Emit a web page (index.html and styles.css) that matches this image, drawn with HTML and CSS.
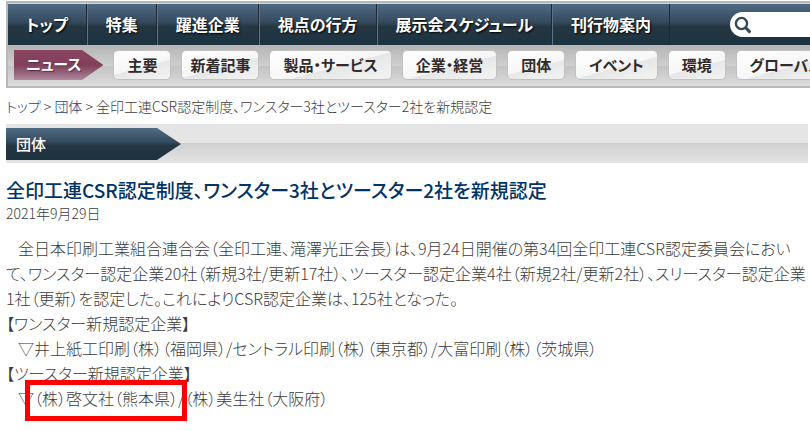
FILE: index.html
```html
<!DOCTYPE html>
<html lang="ja">
<head>
    <meta charset="UTF-8">
    <meta name="viewport" content="width=device-width, initial-scale=1.0">
    <title>全印工連CSR認定制度、ワンスター3社とツースター2社を新規認定</title>
    <link rel="stylesheet" href="styles.css">
</head>
<body>
    <header class="header">
        <nav class="main-nav">
            <a href="#">トップ</a>
            <a href="#">特集</a>
            <a href="#">躍進企業</a>
            <a href="#">視点の行方</a>
            <a href="#">展示会スケジュール</a>
            <a href="#">刊行物案内</a>
            <form class="search" action="#" method="get">
                <svg width="18" height="18" viewBox="0 0 18 18" aria-hidden="true">
                    <circle cx="7.5" cy="7.5" r="5.6" fill="none" stroke="#34495a" stroke-width="2.4"/>
                    <path d="M12 12l3.4 3.6" stroke="#34495a" stroke-width="3" stroke-linecap="round"/>
                </svg>
                <input type="text" name="q" aria-label="検索">
            </form>
        </nav>
        <nav class="sub-nav">
            <a href="#" class="current">ニュース</a>
            <a href="#" class="tab">主要</a>
            <a href="#" class="tab narrow">新着記事</a>
            <a href="#" class="tab">製品・サービス</a>
            <a href="#" class="tab">企業・経営</a>
            <a href="#" class="tab">団体</a>
            <a href="#" class="tab">イベント</a>
            <a href="#" class="tab">環境</a>
            <a href="#" class="tab">グローバル</a>
        </nav>
    </header>

    <main class="content">
        <div class="breadcrumb"><a href="#">トップ</a> &gt; <a href="#">団体</a> &gt; 全印工連CSR認定制度、ワンスター3社とツースター2社を新規認定</div>
        <div class="section-bar">
            <h2>団体</h2>
        </div>
        <article>
            <h1>全印工連CSR認定制度、ワンスター3社とツースター2社を新規認定</h1>
            <div class="date">2021年9月29日</div>
            <div class="text">
                <p class="indent">
                    全日本印刷工業組合連合会（全印工連、滝澤光正会長）は、9月24日開催の第34回全印工連CSR認定委員会におい<br>
                    て、ワンスター認定企業20社（新規3社/更新17社）、ツースター認定企業4社（新規2社/更新2社）、スリースター認定企業<br>
                    1社（更新）を認定した。これによりCSR認定企業は、125社となった。
                </p>
                <p>【ワンスター新規認定企業】</p>
                <p class="indent">▽井上紙工印刷（株）（福岡県）/セントラル印刷（株）（東京都）/大富印刷（株）（茨城県）</p>
                <p>【ツースター新規認定企業】</p>
                <p class="indent">▽<span class="marked">（株）啓文社（熊本県）</span>/（株）美生社（大阪府）</p>
            </div>
        </article>
    </main>
</body>
</html>
```
FILE: styles.css
```css
body {
    font-family: "Noto Sans CJK JP", sans-serif;
    font-feature-settings: "palt";
    margin: 0;
    padding: 1px 0 16px 6px;
    color: #3c3c3c;
    background-color: #fff;
}

a {
    text-decoration: none;
}

/* header */
.header {
    border: 2px solid #b8b9b6;
    border-right: 0;
    background-color: #d6d6d6;
    white-space: nowrap;
    overflow: hidden;
}

.main-nav {
    display: flex;
    align-items: center;
    height: 41px;
    margin-top: 1px;
    background: linear-gradient(#4f6b84, #34495c 45%, #243642 55%, #1c3440);
}

.main-nav a {
    flex: none;
    padding: 0 18px;
    border-left: 1px solid #5b7489;
    border-right: 1px solid #1b2a36;
    font-size: 16px;
    line-height: 41px;
    font-weight: bold;
    color: #fff;
    text-shadow: 1px 1px 2px #000;
}

.main-nav a:first-child {
    border-left: 0;
}

.search {
    display: flex;
    flex: 1;
    align-items: center;
    min-width: 60px;
    height: 25px;
    margin-left: 60px;
    padding-left: 4px;
    border-radius: 13px 0 0 13px;
    background-color: #fff;
}

.search svg {
    flex: none;
}

.search input {
    flex: 1;
    min-width: 0;
    border: 0;
    outline: none;
    background: none;
}

.sub-nav {
    display: flex;
    gap: 10px;
    padding: 5px 0 6px 6px;
    background: linear-gradient(#b4b4b4, #cfcfcf 50%, #c2c2c2 50%, #dcdcdc);
}

.sub-nav a {
    flex: none;
    box-sizing: border-box;
    height: 30px;
    font-size: 15px;
    line-height: 28px;
    font-weight: bold;
}

.current {
    padding: 0 22px 0 12px;
    color: #fff;
    text-shadow: 1px 1px 1px #5c2c42;
    background: linear-gradient(#8a4561, #80405a 50%, #93617a 75%, #b08a9c);
    clip-path: polygon(0 0, 68px 0, 100% 50%, 68px 100%, 0 100%);
}

.tab {
    padding: 0 13px;
    border: 1px solid #c0c1c0;
    border-radius: 5px;
    color: #332a2a;
    background: linear-gradient(165deg, #fff, #f6f6f6 55%, #e6e8e7 56%, #f3f3f3);
}

.tab.narrow {
    padding: 0 8px;
}

/* page body */
.content {
    padding-right: 2px;
}

.breadcrumb {
    padding: 8px 0 7px;
    font-size: 14px;
    line-height: 21px;
    font-weight: 300;
    white-space: nowrap;
}

.breadcrumb a {
    color: #144272;
}

.section-bar {
    padding: 4px 0 3px;
    background: linear-gradient(#e5e5e5 50%, #d0d0d0 50%, #e4e4e4);
}

.section-bar h2 {
    width: 165px;
    margin: 0;
    padding-left: 10px;
    font-size: 15px;
    line-height: 32px;
    font-weight: 500;
    color: #fff;
    background: linear-gradient(#4f6b84, #34495c 45%, #243642 55%, #1c3440);
    clip-path: polygon(0 0, 151px 0, 100% 50%, 151px 100%, 0 100%);
}

h1 {
    margin: 13px 0 0;
    font-size: 19px;
    line-height: 27px;
    font-weight: 500;
    color: #003366;
    white-space: nowrap;
}

.date {
    font-size: 14px;
    line-height: 21px;
    font-weight: 300;
}

.text {
    margin-top: 12px;
    font-size: 16px;
    line-height: 25px;
    font-weight: 300;
    white-space: nowrap;
}

.text p {
    margin: 0;
}

.text .indent {
    text-indent: 12px;
}

/* red frame over the company name */
.marked {
    position: relative;
}

.marked::after {
    content: "";
    position: absolute;
    top: -6px;
    right: -9px;
    bottom: -11px;
    left: -9px;
    border: 5px solid #f00;
}
```
